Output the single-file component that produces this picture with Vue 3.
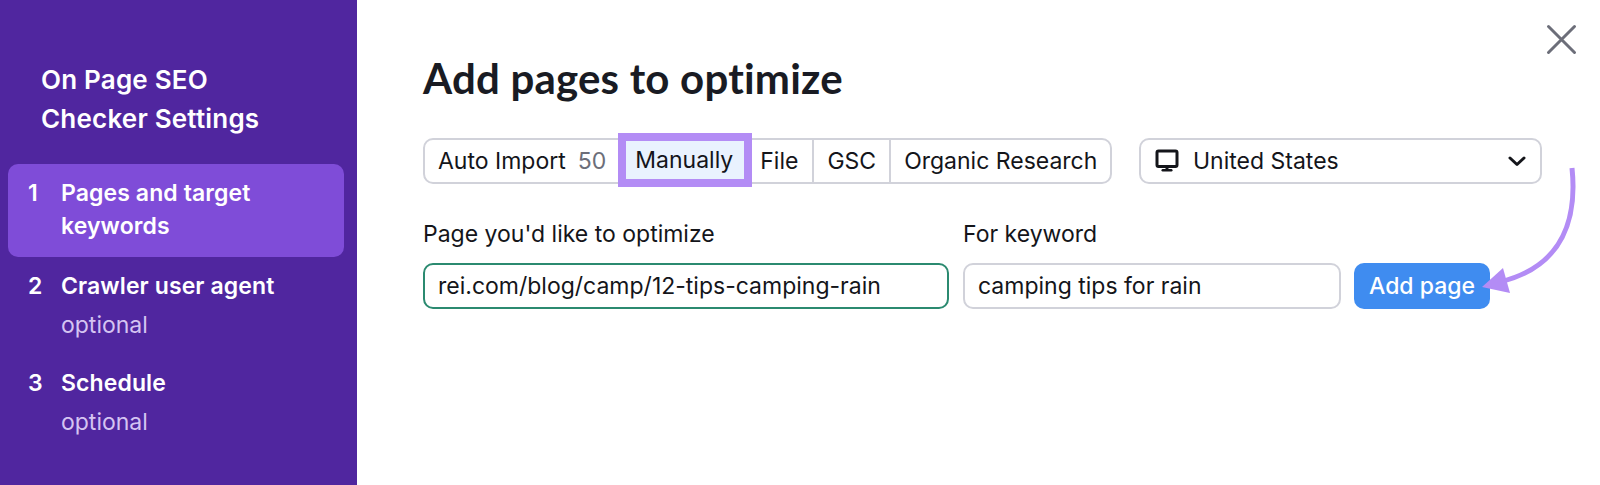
<script setup>
const steps = [
  { n: 1, title: 'Pages and target keywords', active: true },
  { n: 2, title: 'Crawler user agent', note: 'optional' },
  { n: 3, title: 'Schedule', note: 'optional' },
]
const tabs = [
  { label: 'Auto Import', count: 50 },
  { label: 'Manually', active: true },
  { label: 'File' },
  { label: 'GSC' },
  { label: 'Organic Research' },
]
</script>

<template>
  <div class="page">
    <aside class="sidebar">
      <div class="side-title">On Page SEO<br />Checker Settings</div>
      <div
        v-for="s in steps"
        :key="s.n"
        class="step"
        :class="{ active: s.active }"
      >
        <span class="num">{{ s.n }}</span>
        <div class="step-body">
          <div class="step-title">{{ s.title }}</div>
          <div v-if="s.note" class="step-note">{{ s.note }}</div>
        </div>
      </div>
    </aside>

    <main class="main">
      <h1>Add pages to optimize</h1>

      <div class="toolbar">
        <div class="tabs">
          <div
            v-for="t in tabs"
            :key="t.label"
            class="tab"
            :class="{ active: t.active }"
          >
            {{ t.label }}<span v-if="t.count" class="count">{{ t.count }}</span>
          </div>
        </div>
        <div class="select">
          <svg class="monitor" width="24" height="24" viewBox="0 0 24 24">
            <rect x="2" y="2" width="20" height="15.5" rx="1.5" fill="none" stroke="#14151a" stroke-width="3" />
            <path d="M10.5 17.5h3v2.5h-3z" fill="#14151a" />
            <rect x="6.5" y="20" width="11" height="2.5" rx="1.2" fill="#14151a" />
          </svg>
          <span>United States</span>
          <svg class="chev" width="18" height="12" viewBox="0 0 18 12">
            <path d="M2 3l7 6.5L16 3" fill="none" stroke="#14151a" stroke-width="3" stroke-linecap="round" stroke-linejoin="round" />
          </svg>
        </div>
      </div>

      <div class="form">
        <div class="field first">
          <label>Page you'd like to optimize</label>
          <div class="input valid">rei.com/blog/camp/12-tips-camping-rain</div>
        </div>
        <div class="field second">
          <label>For keyword</label>
          <div class="input">camping tips for rain</div>
        </div>
        <button class="add">Add page</button>
      </div>
    </main>

    <svg class="close" width="31" height="31" viewBox="0 0 31 31">
      <path d="M2.5 2.5l26 26M28.5 2.5l-26 26" stroke="#6c6e79" stroke-width="3" stroke-linecap="round" />
    </svg>

    <svg class="arrow" width="110" height="135" viewBox="0 0 110 135">
      <path d="M92 2C97 50 85 100 20 116" fill="none" stroke="#b38cf5" stroke-width="5" />
      <path d="M2 121L23 102L30 127Z" fill="#b38cf5" />
    </svg>
  </div>
</template>

<style>
html, body { margin: 0; background: #fff; }
</style>

<style scoped>
.page {
  position: relative;
  display: flex;
  width: 1600px;
  height: 485px;
  overflow: hidden;
  font-family: Inter, "Liberation Sans", sans-serif;
  color: #14151a;
  background: #fff;
}
.sidebar {
  box-sizing: border-box;
  width: 357px;
  flex: none;
  padding: 60px 13px 0 8px;
  background: #50269f;
  color: #fff;
}
.side-title {
  padding-left: 33px;
  margin-bottom: 26px;
  font-size: 26px;
  font-weight: 600;
  letter-spacing: 0.2px;
  line-height: 39px;
}
.step {
  display: flex;
  padding: 11px 20px 15px;
  border-radius: 10px;
}
.step.active {
  background: #7f4cd8;
  padding: 13px 20px 14px;
  margin-bottom: 2px;
}
.num {
  width: 33px;
  flex: none;
  font-size: 23px;
  font-weight: 600;
  line-height: 33px;
}
.step-title {
  font-size: 23px;
  font-weight: 600;
  letter-spacing: 0.1px;
  line-height: 33px;
}
.step-note {
  margin-top: 6px;
  font-size: 23px;
  line-height: 32px;
  color: #d5c4f2;
}
.main {
  flex: 1;
  padding: 50px 58px 0 66px;
}
h1 {
  margin: 0 0 31px;
  font-family: Lato, Inter, sans-serif;
  font-size: 42px;
  font-weight: 700;
  letter-spacing: 0.2px;
  line-height: 57px;
  color: #191b23;
}
.toolbar {
  display: flex;
  gap: 27px;
}
.tabs {
  display: flex;
  box-sizing: border-box;
  height: 46px;
  width: 689px;
  border: 2px solid #d1d2da;
  border-radius: 10px;
  background: #fff;
}
.tab {
  display: flex;
  align-items: center;
  padding: 0 13px;
  font-size: 23px;
  border-left: 2px solid #d1d2da;
  white-space: nowrap;
}
.tab:first-child { border-left: none; padding-right: 12px; }
.tab.active {
  position: relative;
  z-index: 1;
  border-left: none;
  background: #e9f2fe;
  outline: 8px solid #b38cf5;
  padding: 0 11px 0 9px;
  margin: 1px 8px 3px 8px;
  height: 38px;
}
.tab.active + .tab { border-left: none; padding: 0 14px 0 8px; }
.count {
  margin-left: 12px;
  color: #6c6e79;
}
.select {
  display: flex;
  align-items: center;
  box-sizing: border-box;
  width: 403px;
  height: 46px;
  padding: 0 14px 0 14px;
  border: 2px solid #d1d2da;
  border-radius: 10px;
  font-size: 23px;
}
.monitor { margin-right: 14px; }
.chev { margin-left: auto; }
.form {
  display: flex;
  align-items: flex-end;
  margin-top: 32px;
}
.field label {
  display: block;
  margin-bottom: 11px;
  font-size: 23px;
  line-height: 36px;
}
.field.first { width: 526px; margin-right: 14px; }
.field.second { width: 378px; margin-right: 13px; }
.input {
  box-sizing: border-box;
  height: 46px;
  padding: 0 13px;
  display: flex;
  align-items: center;
  border: 2px solid #d1d2da;
  border-radius: 10px;
  font-size: 23px;
}
.input.valid { border-color: #2b8a70; }
.add {
  width: 136px;
  height: 46px;
  padding: 0;
  border: none;
  border-radius: 10px;
  background: #3f8cf0;
  color: #fff;
  font-family: inherit;
  font-size: 23px;
  font-weight: 500;
}
.close {
  position: absolute;
  top: 24px;
  left: 1546px;
}
.arrow {
  position: absolute;
  left: 1480px;
  top: 166px;
}
</style>
